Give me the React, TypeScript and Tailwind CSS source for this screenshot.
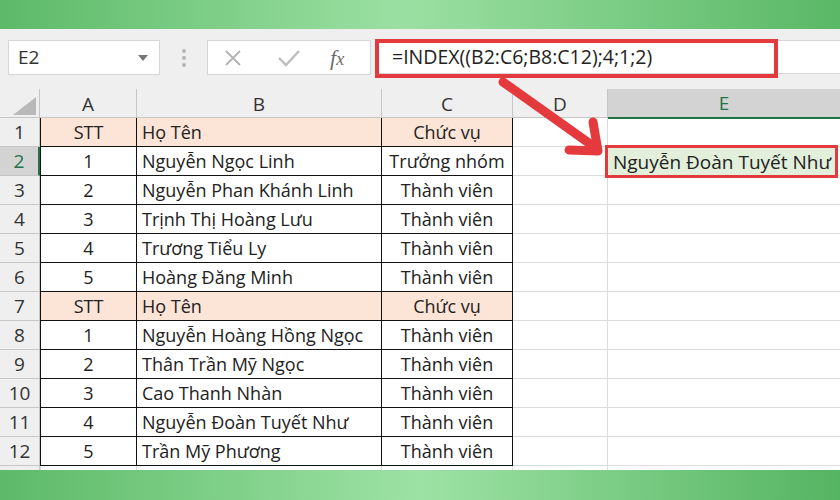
import React from 'react';

type Row = { stt: string; name: string; role: string; head?: boolean };

const rows: Row[] = [
  { stt: 'STT', name: 'Họ Tên', role: 'Chức vụ', head: true },
  { stt: '1', name: 'Nguyễn Ngọc Linh', role: 'Trưởng nhóm' },
  { stt: '2', name: 'Nguyễn Phan Khánh Linh', role: 'Thành viên' },
  { stt: '3', name: 'Trịnh Thị Hoàng Lưu', role: 'Thành viên' },
  { stt: '4', name: 'Trương Tiểu Ly', role: 'Thành viên' },
  { stt: '5', name: 'Hoàng Đăng Minh', role: 'Thành viên' },
  { stt: 'STT', name: 'Họ Tên', role: 'Chức vụ', head: true },
  { stt: '1', name: 'Nguyễn Hoàng Hồng Ngọc', role: 'Thành viên' },
  { stt: '2', name: 'Thân Trần Mỹ Ngọc', role: 'Thành viên' },
  { stt: '3', name: 'Cao Thanh Nhàn', role: 'Thành viên' },
  { stt: '4', name: 'Nguyễn Đoàn Tuyết Như', role: 'Thành viên' },
  { stt: '5', name: 'Trần Mỹ Phương', role: 'Thành viên' },
];

const cols = 'grid grid-cols-[40px_97px_245px_131px_95px_1fr] grid-rows-[29px]';

const App: React.FC = () => {
  return (
    <div
      className="relative w-[840px] h-[500px] overflow-hidden flex flex-col bg-white text-[#222]"
      style={{ fontFamily: '"Open Sans", "Noto Sans", sans-serif' }}
    >
      {/* green band */}
      <div className="h-[29px] shrink-0 bg-[linear-gradient(90deg,#5dba69_0%,#9be0a2_48%,#5ab866_100%)]" />

      {/* formula toolbar */}
      <div className="relative h-[60px] shrink-0 bg-[#efefef] flex items-start pt-[11px]">
        <div className="ml-[8px] w-[152px] h-[35px] bg-white border border-[#d6d6d6] flex items-center justify-between pl-[9px] pr-[11px]">
          <span className="text-[19px] text-[#333]">E2</span>
          <svg width="10" height="6" viewBox="0 0 10 6">
            <path d="M0 0h10L5 6z" fill="#777" />
          </svg>
        </div>
        <div className="w-[47px] h-[35px] flex flex-col items-center justify-center gap-[3px]">
          <span className="w-[4px] h-[4px] rounded-full bg-[#b5b5b5]" />
          <span className="w-[4px] h-[4px] rounded-full bg-[#b5b5b5]" />
          <span className="w-[4px] h-[4px] rounded-full bg-[#b5b5b5]" />
        </div>
        <div className="w-[164px] h-[35px] bg-white border border-[#d6d6d6] flex items-center">
          <svg className="ml-[16px]" width="18" height="18" viewBox="0 0 18 18">
            <path d="M2 2l14 14M16 2L2 16" stroke="#b3b3b3" strokeWidth="1.8" fill="none" />
          </svg>
          <svg className="ml-[36px]" width="22" height="18" viewBox="0 0 22 18">
            <path d="M1 9l7 7L21 2" stroke="#bdbdbd" strokeWidth="2.4" fill="none" />
          </svg>
          <span
            className="ml-[30px] text-[22px] italic text-[#6b6b6b] leading-none"
            style={{ fontFamily: '"Liberation Serif", "DejaVu Serif", serif' }}
          >
            f<span className="text-[18px]">x</span>
          </span>
        </div>
        <div className="ml-[5px] flex-1 h-[34px] bg-white border-y border-[#d6d6d6] flex items-center pl-[16px]">
          <span className="text-[19.5px] text-[#222]">=INDEX((B2:C6;B8:C12);4;1;2)</span>
        </div>
        <div className="absolute left-[375px] top-[10px] w-[403px] h-[39px] border-[4px] border-[#e53a3d]" />
      </div>

      {/* column header */}
      <div className={`${cols} h-[29px] shrink-0 bg-[#efefef] text-[19px] leading-[26px] text-[#333] border-b border-[#c6c6c6]`}>
        <div className="relative border-r border-[#c6c6c6]">
          <svg className="absolute right-[3px] bottom-[3px]" width="23" height="18" viewBox="0 0 23 18">
            <path d="M23 0v18H0z" fill="#b9b9b9" />
          </svg>
        </div>
        <div className="flex items-center justify-center border-r border-[#c6c6c6]">A</div>
        <div className="flex items-center justify-center border-r border-[#c6c6c6]">B</div>
        <div className="flex items-center justify-center border-r border-[#c6c6c6]">C</div>
        <div className="flex items-center justify-center border-r border-[#c6c6c6]">D</div>
        <div className="flex items-center justify-center bg-[#d3d3d3] text-[#217346] border-b-2 border-[#217346] -mb-[1px]">E</div>
      </div>

      {/* rows */}
      {rows.map((r, i) => {
        const sel = i === 1;
        const bg = r.head ? 'bg-[#fce4d6]' : 'bg-white';
        return (
          <div key={i} className={`${cols} h-[29px] shrink-0 text-[18px] leading-[26px]`}>
            <div
              className={`flex items-center justify-center text-[19px] border-b border-[#c6c6c6] ${
                sel ? 'bg-[#d3d3d3] text-[#217346] border-r-2 border-r-[#217346]' : 'bg-[#efefef] text-[#333] border-r border-r-[#c6c6c6]'
              }`}
            >
              {i + 1}
            </div>
            <div className={`flex items-center justify-center border-l border-r border-b border-[#111] ${bg}`}>{r.stt}</div>
            <div className={`flex items-center pl-[5px] border-r border-b border-[#111] ${bg}`}>{r.name}</div>
            <div className={`flex items-center justify-center border-r border-b border-[#111] ${bg}`}>{r.role}</div>
            <div className="border-r border-b border-[#dcdcdc]" />
            <div className="relative border-b border-[#dcdcdc]">
              {sel && (
                <div className="absolute left-[-3px] right-[2px] top-[-2px] bottom-[-3px] border-[3px] border-[#e53a3d] bg-[#e2efda] flex items-center pl-[5px] text-[19px] whitespace-nowrap">
                  Nguyễn Đoàn Tuyết Như
                </div>
              )}
            </div>
          </div>
        );
      })}

      <div className="grid grid-cols-[40px_97px_245px_131px_95px_1fr] flex-1">
        <div className="bg-[#efefef] border-r border-[#c6c6c6]" />
        <div className="border-l border-r border-[#dcdcdc]" />
        <div className="border-r border-[#dcdcdc]" />
        <div className="border-r border-[#dcdcdc]" />
        <div className="border-r border-[#dcdcdc]" />
        <div />
      </div>

      {/* green band */}
      <div className="h-[30px] shrink-0 bg-[linear-gradient(90deg,#5dba69_0%,#9de2a4_50%,#55b462_100%)]" />

      {/* arrow annotation */}
      <svg className="absolute left-0 top-0 pointer-events-none" width="840" height="500" viewBox="0 0 840 500">
        <path d="M503 82L593 146" stroke="#e53a3d" strokeWidth="9" strokeLinecap="round" fill="none" />
        <path d="M569 150L598 151L593 122" stroke="#e53a3d" strokeWidth="9" strokeLinecap="round" strokeLinejoin="round" fill="none" />
      </svg>
    </div>
  );
};

export default App;
